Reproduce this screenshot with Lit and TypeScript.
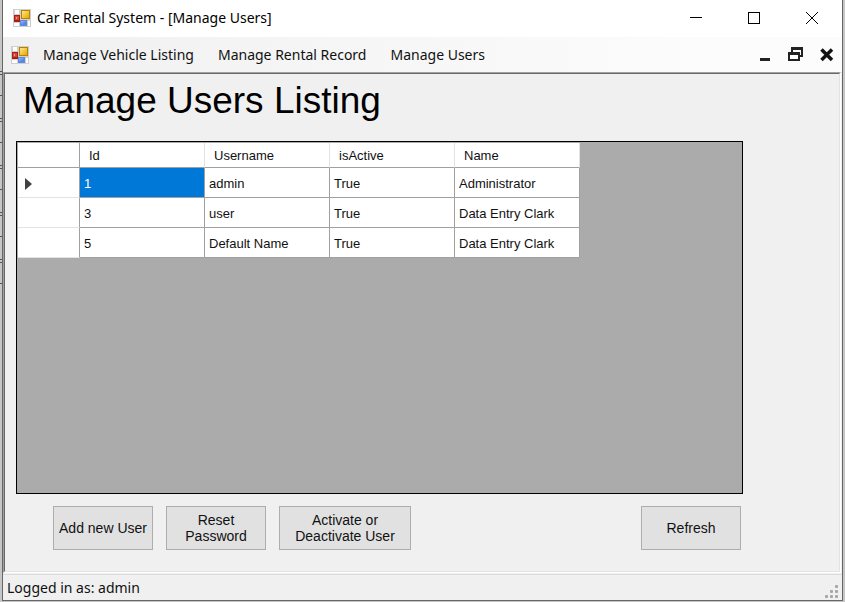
import { LitElement, html, css, svg } from "lit";
import { customElement, property, state } from "lit/decorators.js";

interface User {
  id: number;
  username: string;
  isActive: string;
  name: string;
}

const USERS: User[] = [
  { id: 1, username: "admin", isActive: "True", name: "Administrator" },
  { id: 3, username: "user", isActive: "True", name: "Data Entry Clark" },
  { id: 5, username: "Default Name", isActive: "True", name: "Data Entry Clark" },
];

const formIcon = html`<svg width="18" height="18" viewBox="0 0 18 18" aria-hidden="true">
  ${svg`
    <defs>
      <linearGradient id="gold" x1="0" y1="0" x2="1" y2="1">
        <stop offset="0" stop-color="#ffe68a" /><stop offset="1" stop-color="#e8a800" />
      </linearGradient>
      <linearGradient id="blue" x1="0" y1="0" x2="1" y2="1">
        <stop offset="0" stop-color="#8fbcff" /><stop offset="1" stop-color="#3f78dc" />
      </linearGradient>
    </defs>
    <rect width="18" height="18" fill="#cfcfcf" />
    <rect x="2" y="1" width="4" height="4" fill="#fff" />
    <rect x="1" y="14" width="5" height="3" fill="#fff" />
    <rect x="15" y="12" width="2" height="5" fill="#fff" />
    <rect x="1" y="6" width="6" height="7" fill="#a81d14" />
    <rect x="2" y="7" width="4" height="4" fill="#d24a3c" />
    <rect x="3" y="8" width="1" height="2" fill="#f0a090" />
    <rect x="8" y="1" width="9" height="9" fill="#b98200" />
    <rect x="9" y="2" width="7" height="7" fill="url(#gold)" />
    <rect x="7" y="11" width="7" height="6" fill="#5c8ade" />
    <rect x="8" y="12" width="5" height="3" fill="url(#blue)" />
  `}
</svg>`;

@customElement("title-bar")
export class TitleBar extends LitElement {
  @property() caption = "";

  static styles = css`
    :host { display: flex; align-items: center; height: 36px; padding: 0 1px 1px 10px; background: #fff; font: 14px/20px "Noto Sans", "Open Sans", sans-serif; color: #000; }
    svg { display: block; }
    .caption { flex: 1; margin-left: 6px; white-space: nowrap; }
    .control { width: 58px; height: 36px; padding: 0; border: 0; background: none; display: flex; align-items: center; justify-content: center; }
    .control:hover { background: #e5e5e5; }
  `;

  render() {
    return html`
      ${formIcon}
      <span class="caption">${this.caption}</span>
      <button class="control" aria-label="Minimize">
        <svg width="12" height="12"><path d="M0 5.500H12" stroke="#000" /></svg>
      </button>
      <button class="control" aria-label="Maximize">
        <svg width="12" height="12"><rect x=".5" y=".5" width="11" height="11" fill="none" stroke="#000" /></svg>
      </button>
      <button class="control" aria-label="Close">
        <svg width="12" height="12"><path d="M0 0L12 12M12 0L0 12" stroke="#000" /></svg>
      </button>
    `;
  }
}

@customElement("menu-strip")
export class MenuStrip extends LitElement {
  static styles = css`
    :host { display: flex; align-items: center; height: 35px; padding: 0 6px 0 8px; background: linear-gradient(90deg, #f0f0f0, #fcfcfc 85%); font: 14px/20px "Noto Sans", "Open Sans", sans-serif; }
    svg { display: block; }
    .items { flex: 1; display: flex; gap: 24px; margin-left: 14px; white-space: nowrap; }
    .item { color: #111; text-decoration: none; }
    .controls { display: flex; gap: 13px; }
    .control { padding: 0; border: 0; background: none; }
  `;

  render() {
    return html`
      ${formIcon}
      <nav class="items">
        <a class="item" href="#vehicles">Manage Vehicle Listing</a>
        <a class="item" href="#rentals">Manage Rental Record</a>
        <a class="item" href="#users">Manage Users</a>
      </nav>
      <div class="controls">
        <button class="control" aria-label="Minimize child window">
          <svg width="18" height="16"><rect x="4" y="11" width="10" height="3" fill="#222" /></svg>
        </button>
        <button class="control" aria-label="Restore child window">
          <svg width="18" height="16">
            <path d="M5 5V1H15V9H12" fill="none" stroke="#222" stroke-width="2" />
            <path d="M4 1.500H16" stroke="#222" stroke-width="3" />
            <rect x="2" y="6" width="10" height="7" fill="#fff" stroke="#222" stroke-width="2" />
            <path d="M1 6.500H13" stroke="#222" stroke-width="3" />
          </svg>
        </button>
        <button class="control" aria-label="Close child window">
          <svg width="18" height="16"><path d="M3.500 2.500L14 13M14 2.500L3.500 13" stroke="#111" stroke-width="3.500" /></svg>
        </button>
      </div>
    `;
  }
}

@customElement("user-grid")
export class UserGrid extends LitElement {
  @property({ attribute: false }) users: User[] = [];
  @state() private current = 0;

  static styles = css`
    :host { display: block; box-sizing: border-box; border: 1px solid #000; padding: 1px; background: #ababab; font: 13px/18px "Liberation Sans", Arial, sans-serif; color: #111; }
    .grid { border-spacing: 0; table-layout: fixed; width: 562px; }
    .marker-col { width: 62px; }
    th, td { box-sizing: border-box; background: #fff; font-weight: 400; text-align: left; white-space: nowrap; border-right: 1px solid #a0a0a0; border-bottom: 1px solid #a0a0a0; }
    th { height: 25px; padding: 2px 0 0 9px; border-right-color: #e3e3e3; }
    .corner { border-right-color: #a0a0a0; }
    td { height: 30px; padding: 2px 0 0 4px; }
    .marker { border-bottom-color: #e3e3e3; padding: 2px 0 0 7px; }
    .marker svg { display: block; }
    .selected { background: #0078d7; color: #fff; }
  `;

  render() {
    return html`
      <table class="grid" aria-label="Users">
        <colgroup><col class="marker-col" /><col /><col /><col /><col /></colgroup>
        <thead>
          <tr>
            <th class="corner"></th>
            <th scope="col">Id</th>
            <th scope="col">Username</th>
            <th scope="col">isActive</th>
            <th scope="col">Name</th>
          </tr>
        </thead>
        <tbody>
          ${this.users.map(
            (u, i) => html`<tr @click=${() => (this.current = i)}>
              <td class="marker">
                ${i === this.current
                  ? html`<svg width="7" height="12" aria-hidden="true"><path d="M0 0L7 6L0 12Z" fill="#404040" /></svg>`
                  : ""}
              </td>
              <td class=${i === this.current ? "selected" : ""}>${u.id}</td>
              <td>${u.username}</td>
              <td>${u.isActive}</td>
              <td>${u.name}</td>
            </tr>`,
          )}
        </tbody>
      </table>
    `;
  }
}

@customElement("app-root")
export class AppRoot extends LitElement {
  static styles = css`
    :host {
      display: flex; box-sizing: border-box; min-height: 100vh; padding: 0 2px 1px;
      background: linear-gradient(#c6c6c6, #c6c6c6) 0 306px / 100% 100% no-repeat,
        linear-gradient(#c6c6c6, #c6c6c6) 2px 0 / 100% 100% no-repeat,
        linear-gradient(#c6c6c6, #c6c6c6) 0 0 / 100% 70px no-repeat,
        repeating-linear-gradient(#c6c6c6 0 1px, #555 1px 2px, #c6c6c6 2px 24px, #555 24px 25px, #c6c6c6 25px 27px, #555 27px 28px, #c6c6c6 28px 47px);
    }
    .window { flex: 1; display: flex; flex-direction: column; border: 1px solid #666; border-top: 0; background: #f0f0f0; min-width: 0; }
    .client { flex: 1; display: flex; flex-direction: column; margin-right: 1px; border: 1px solid #a0a0a0; border-right-color: #fff; border-bottom-color: #fff; }
    .form { flex: 1; display: flex; flex-direction: column; padding: 0 96px 21px 11px; border: 1px solid #696969; border-right-color: #e3e3e3; border-bottom-color: #e3e3e3; }
    .heading { margin: 0 0 13px 7px; font: 400 37px/54px "Liberation Sans", Arial, sans-serif; color: #000; }
    .users { flex: 1; }
    .actions { display: flex; gap: 13px; margin-top: 12px; padding: 0 2px 0 37px; }
    .action { box-sizing: border-box; width: 100px; height: 44px; padding: 0; border: 1px solid #adadad; background: #e1e1e1; font: 14px/16px "Liberation Sans", Arial, sans-serif; color: #111; }
    .action:hover { background: #e5f1fb; border-color: #0078d7; }
    .wide { width: 132px; }
    .last { margin-left: auto; }
    .status { display: flex; align-items: center; justify-content: space-between; box-sizing: border-box; height: 26px; padding: 1px 4px 0; margin-top: 1px; border-top: 1px solid #dcdcdc; font: 14px/20px "Noto Sans", "Open Sans", sans-serif; color: #111; }
    .grip { display: block; align-self: flex-end; margin-bottom: 2px; }
  `;

  render() {
    return html`
      <div class="window">
        <title-bar caption="Car Rental System - [Manage Users]"></title-bar>
        <menu-strip></menu-strip>
        <main class="client">
          <div class="form">
            <h1 class="heading">Manage Users Listing</h1>
            <user-grid class="users" .users=${USERS}></user-grid>
            <div class="actions">
              <button class="action">Add new User</button>
              <button class="action">Reset<br />Password</button>
              <button class="action wide">Activate or<br />Deactivate User</button>
              <button class="action last">Refresh</button>
            </div>
          </div>
        </main>
        <footer class="status">
          <span>Logged in as: admin</span>
          <svg class="grip" width="13" height="13" aria-hidden="true">
            ${[[10, 0], [5, 5], [10, 5], [0, 10], [5, 10], [10, 10]].map(
              ([x, y]) => svg`<rect x=${x} y=${y} width="3" height="3" rx="1" fill="#a6a6a6" />`,
            )}
          </svg>
        </footer>
      </div>
    `;
  }
}
